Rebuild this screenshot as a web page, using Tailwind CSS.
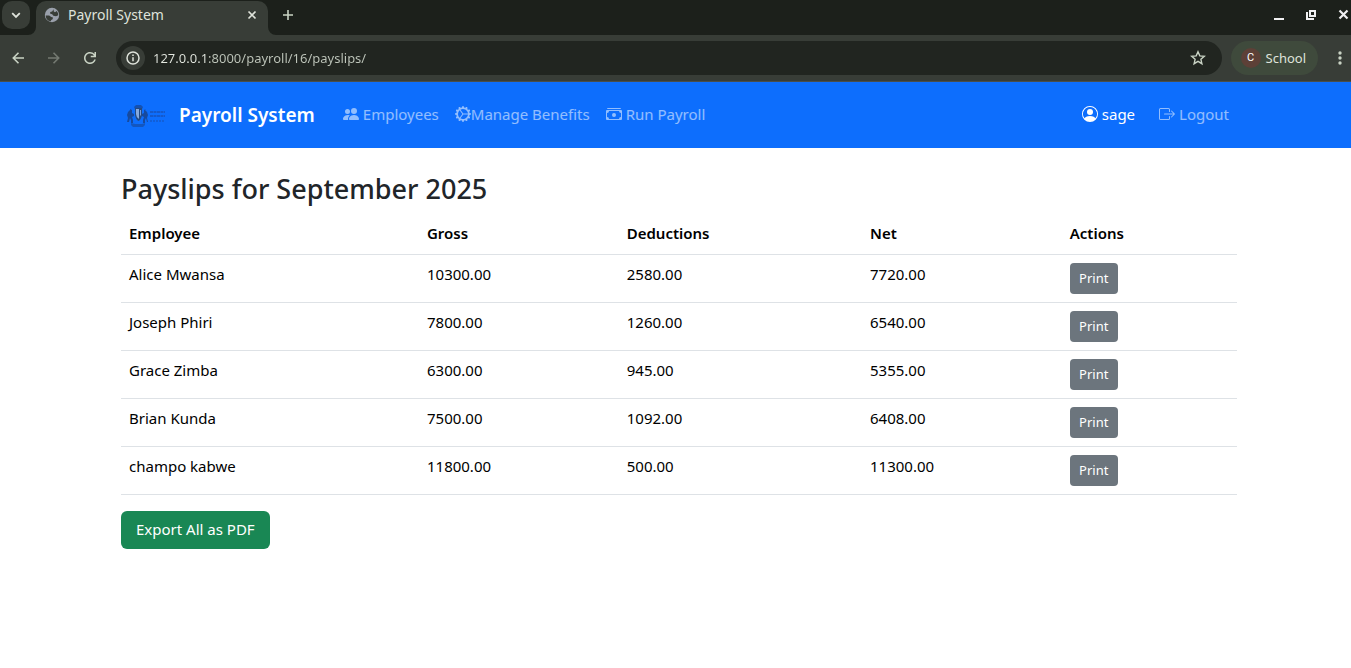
<!DOCTYPE html>
<html lang="en">
<head>
<meta charset="utf-8">
<meta name="viewport" content="width=device-width, initial-scale=1">
<title>Payroll System</title>
<script src="https://cdn.jsdelivr.net/npm/@tailwindcss/browser@4"></script>
</head>
<body class="min-h-screen bg-white font-['Noto_Sans',sans-serif] text-[15px] leading-6 text-[#212529]">

<!-- Browser window frame -->
<header class="text-[#dfe3db]">
  <div class="flex h-[35px] items-start bg-[#1c201b] pl-[2px]">
    <button aria-label="Search tabs" class="mt-px flex size-7 items-center justify-center rounded-[10px] bg-[#383d37]">
      <svg class="size-4" viewBox="0 0 16 16" fill="none" stroke="currentColor" stroke-width="1.800"><path d="M4.200 6.200L8 10l3.800-3.800"/></svg>
    </button>
    <div class="relative mt-px ml-[6px] flex h-[34px] w-[232px] items-center rounded-t-[10px] bg-[#383d37] pr-2 pb-[6px] pl-2">
      <svg class="absolute bottom-0 -left-2 size-2 text-[#383d37]" viewBox="0 0 8 8" fill="currentColor"><path d="M8 0v8H0a8 8 0 0 0 8-8"/></svg>
      <svg class="absolute -right-2 bottom-0 size-2 text-[#383d37]" viewBox="0 0 8 8" fill="currentColor"><path d="M0 0v8h8a8 8 0 0 1-8-8"/></svg>
      <svg class="size-4" viewBox="0 0 16 16"><circle cx="8" cy="8" r="7.200" fill="#9aa0ab"/><g fill="#383d37"><path d="M9.500 2.300L8.200 4.500 6.300 5 6 6.600l2.200.7 1.200 1.500 2.600.4 2.300-1a6.300 6.300 0 0 0-1.600-4.300L11 5.300 9.800 4.500z"/><path d="M1.700 8.400h3.500l2 1.700 1.800.5-.4 1.600-1.400.8-.4 1.300a6.300 6.300 0 0 1-5.100-5.900z"/></g></svg>
      <span class="ml-2 grow text-[14px]">Payroll System</span>
      <button aria-label="Close tab" class="flex size-4 items-center justify-center">
        <svg class="size-4" viewBox="0 0 16 16" fill="none" stroke="currentColor" stroke-width="1.700"><path d="M4.500 4.500l7 7M11.500 4.500l-7 7"/></svg>
      </button>
    </div>
    <button aria-label="New tab" class="mt-[7px] ml-3 flex size-4 items-center justify-center">
      <svg class="size-4 text-[#c9d3c4]" viewBox="0 0 16 16" fill="none" stroke="currentColor" stroke-width="1.600"><path d="M8 3v10M3 8h10"/></svg>
    </button>
    <div class="mt-[7px] ml-auto flex gap-4 text-[#f0f0f2]">
      <button aria-label="Minimize" class="size-4"><svg class="size-4" viewBox="0 0 16 16" fill="currentColor"><path d="M3 11h10v2H3z"/></svg></button>
      <button aria-label="Restore" class="size-4"><svg class="size-4" viewBox="0 0 16 16" fill="none" stroke="currentColor" stroke-width="2"><path d="M7 4h5v5H7zM4 5v7h7"/></svg></button>
      <button aria-label="Close window" class="size-4"><svg class="size-4" viewBox="0 0 16 16" fill="none" stroke="currentColor" stroke-width="2.200"><path d="M4.500 3.500l8 8M12.500 3.500l-8 8"/></svg></button>
    </div>
  </div>
  <div class="flex h-[47px] items-center border-b border-[#4a4e49] bg-[#383d37] pr-[3px] pl-[10px]">
    <div class="flex gap-5 text-[#c9d3c4]">
      <button aria-label="Back" class="size-4"><svg class="size-4" viewBox="0 0 16 16" fill="none" stroke="currentColor" stroke-width="1.600"><path d="M14 8H3.500M8.500 2.800L3.300 8l5.200 5.200"/></svg></button>
      <button aria-label="Forward" class="size-4 text-[#747a72]"><svg class="size-4" viewBox="0 0 16 16" fill="none" stroke="currentColor" stroke-width="1.600"><path d="M2 8h10.500M7.500 2.800L12.700 8l-5.200 5.200"/></svg></button>
      <button aria-label="Reload" class="size-4"><svg class="size-4" viewBox="4 4 16 16" fill="currentColor"><path d="M12 18c-1.675 0-3.096-.58-4.262-1.743C6.575 15.095 6 13.675 6 12s.58-3.096 1.738-4.258C8.904 6.580 10.325 6 12 6c.86 0 1.683.177 2.470.530A5.800 5.800 0 0 1 16.500 8.050V6H18v5.250h-5.250v-1.500h3.150A4.400 4.400 0 0 0 14.260 8.100 4.350 4.350 0 0 0 12 7.500c-1.250 0-2.313.438-3.188 1.313C7.938 9.688 7.500 10.750 7.500 12s.438 2.313 1.313 3.188c.874.874 1.937 1.312 3.187 1.312.963 0 1.830-.275 2.606-.825a4.360 4.360 0 0 0 1.632-2.175h1.574a5.860 5.860 0 0 1-2.137 3.244A5.870 5.870 0 0 1 12 18z"/></svg></button>
    </div>
    <div class="ml-[18px] flex h-[34px] grow items-center rounded-full bg-[#212520] pr-4 pl-[5px]">
      <button aria-label="Site information" class="flex size-6 shrink-0 items-center justify-center rounded-full bg-[#383d37]">
        <svg class="size-4" viewBox="0 0 16 16" fill="none" stroke="currentColor" stroke-width="1.500"><circle cx="8" cy="8" r="6"/><path d="M8 7.200v4M8 4.500v1.600"/></svg>
      </button>
      <input type="text" aria-label="Address" value="127.0.0.1:8000/payroll/16/payslips/" class="ml-2 min-w-0 grow bg-linear-to-r from-[#e4e8e0] from-[53px] to-[#bfc6bb] to-[53px] bg-clip-text text-[13px] text-transparent outline-none">
      <button aria-label="Bookmark" class="size-4 text-[#c9d3c4]"><svg class="size-4" viewBox="0 0 16 16" fill="none" stroke="currentColor" stroke-width="1.400"><path d="M8 1.800l1.800 4.100 4.500.4-3.400 3 1 4.400L8 11.400l-3.900 2.300 1-4.400-3.400-3 4.500-.4z"/></svg></button>
    </div>
    <button class="ml-[9px] flex h-[34px] items-center gap-[5px] rounded-full bg-[#3f4a3c] pr-3 pl-[10px]">
      <span class="flex size-5 items-center justify-center rounded-full bg-[#5d4037] font-['Roboto',sans-serif] text-[11px] text-white">C</span>
      <span class="text-[13px]">School</span>
    </button>
    <button aria-label="Menu" class="ml-[14px] size-4 text-[#c9d3c4]"><svg class="size-4" viewBox="0 0 16 16" fill="currentColor"><circle cx="8" cy="3" r="1.700"/><circle cx="8" cy="8" r="1.700"/><circle cx="8" cy="13" r="1.700"/></svg></button>
  </div>
</header>

<nav class="bg-[#0d6efd] pl-[7px]">
  <div class="mx-auto flex h-[66px] max-w-[1140px] items-center px-3">
    <a href="#" class="flex items-center gap-2 text-[19px] font-semibold text-white">
      <svg class="h-10 w-[50px]" viewBox="0 0 50 40" role="img" aria-label="University crest">
        <!-- supporters -->
        <g fill="#174a9e">
          <path d="M9 14l2 1v3l2 1v2l-2 1 1 3v3h-2v-3l-1-2-1 4H6l1-4-1-3 1-3 2-2z"/>
          <path d="M25 14l-2 1v3l-2 1v2l2 1-1 3v3h2v-3l1-2 1 4h1l-1-4 1-3-1-3-2-2z"/>
          <path d="M15 10h5l2 2-1 2h-7l-1-2z" opacity=".8"/>
          <path d="M10 28l4 1h7l3-1v2l-2 2H12l-2-2z" opacity=".65"/>
        </g>
        <!-- shield -->
        <path d="M14 13h7v7q-1 5-3.500 6-2.500-1-3.500-6z" fill="#244a83"/>
        <path d="M15 14h3v10q-3-2-3-5z" fill="#86a9dd"/>
        <path d="M19 15h1v5l-1 1z" fill="#739bda"/>
        <!-- wordmark -->
        <g stroke="#1459cb" stroke-width="2" stroke-dasharray="2 1"><path d="M29 17h15M29 21h15" stroke-dasharray="3 .5"/><path d="M29 26h15" opacity=".7"/></g>
      </svg>
      <span>Payroll System</span>
    </a>
    <ul class="ml-5 flex grow items-center text-white/55">
      <li><a href="#" class="flex items-center gap-1 px-2 pt-[7px] pb-[9px]"><svg class="size-4" viewBox="0 0 16 16" fill="currentColor"><path d="M7 14s-1 0-1-1 1-4 5-4 5 3 5 4-1 1-1 1zm4-6a3 3 0 1 0 0-6 3 3 0 0 0 0 6m-5.784 6A2.240 2.240 0 0 1 5 13c0-1.355.68-2.750 1.936-3.720A6.300 6.300 0 0 0 5 9c-4 0-5 3-5 4s1 1 1 1zM4.500 8a2.500 2.500 0 1 0 0-5 2.500 2.500 0 0 0 0 5"/></svg>Employees</a></li>
      <li><a href="#" class="flex items-center px-2 pt-[7px] pb-[9px]"><svg class="size-4" viewBox="0 0 16 16" fill="currentColor"><path d="M7.068.727c.243-.97 1.620-.97 1.864 0l.071.286a.96.96 0 0 0 1.622.434l.205-.211c.695-.719 1.888-.03 1.613.931l-.08.284a.96.96 0 0 0 1.187 1.187l.283-.081c.96-.275 1.650.918.931 1.613l-.211.205a.96.96 0 0 0 .434 1.622l.286.071c.97.243.97 1.620 0 1.864l-.286.071a.96.96 0 0 0-.434 1.622l.211.205c.719.695.03 1.888-.931 1.613l-.284-.08a.96.96 0 0 0-1.187 1.187l.081.283c.275.96-.918 1.650-1.613.931l-.205-.211a.96.96 0 0 0-1.622.434l-.071.286c-.243.97-1.620.97-1.864 0l-.071-.286a.96.96 0 0 0-1.622-.434l-.205.211c-.695.719-1.888.03-1.613-.931l.08-.284a.96.96 0 0 0-1.186-1.187l-.284.081c-.96.275-1.650-.918-.931-1.613l.211-.205a.96.96 0 0 0-.434-1.622l-.286-.071c-.97-.243-.97-1.620 0-1.864l.286-.071a.96.96 0 0 0 .434-1.622l-.211-.205c-.719-.695-.03-1.888.931-1.613l.284.08a.96.96 0 0 0 1.187-1.186l-.081-.284c-.275-.96.918-1.650 1.613-.931l.205.211a.96.96 0 0 0 1.622-.434zM12.973 8.500H8.250l-2.834 3.779A4.998 4.998 0 0 0 12.973 8.500m0-1a4.998 4.998 0 0 0-7.557-3.779l2.834 3.780zM4.617 4.322A4.980 4.980 0 0 0 3.002 8c0 1.455.622 2.765 1.615 3.678L7.375 8z"/></svg>Manage Benefits</a></li>
      <li><a href="#" class="flex items-center gap-1 px-2 pt-[7px] pb-[9px]"><svg class="size-4" viewBox="0 0 16 16" fill="currentColor"><path d="M1 3a1 1 0 0 1 1-1h12a1 1 0 0 1 1 1zm7 8a2 2 0 1 0 0-4 2 2 0 0 0 0 4"/><path d="M0 5a1 1 0 0 1 1-1h14a1 1 0 0 1 1 1v8a1 1 0 0 1-1 1H1a1 1 0 0 1-1-1zm3 0a2 2 0 0 1-2 2v4a2 2 0 0 1 2 2h10a2 2 0 0 1 2-2V7a2 2 0 0 1-2-2z"/></svg>Run Payroll</a></li>
    </ul>
    <div class="flex items-center gap-2">
      <span class="flex items-center gap-1 px-2 pt-[7px] pb-[9px] text-white"><svg class="size-4" viewBox="0 0 16 16" fill="currentColor"><path d="M11 6a3 3 0 1 1-6 0 3 3 0 0 1 6 0"/><path fill-rule="evenodd" d="M0 8a8 8 0 1 1 16 0A8 8 0 0 1 0 8m8-7a7 7 0 0 0-5.468 11.370C3.242 11.226 4.805 10 8 10s4.757 1.225 5.468 2.370A7 7 0 0 0 8 1"/></svg>sage</span>
      <a href="#" class="flex items-center gap-1 px-2 pt-[7px] pb-[9px] text-white/55"><svg class="size-4" viewBox="0 0 16 16" fill="currentColor"><path d="M10 12.500a.5.5 0 0 1-.5.5h-8a.5.5 0 0 1-.5-.5v-9a.5.5 0 0 1 .5-.5h8a.5.5 0 0 1 .5.5v2a.5.5 0 0 0 1 0v-2A1.500 1.500 0 0 0 9.500 2h-8A1.500 1.500 0 0 0 0 3.500v9A1.500 1.500 0 0 0 1.500 14h8a1.500 1.500 0 0 0 1.500-1.500v-2a.5.5 0 0 0-1 0z"/><path d="M15.854 8.354a.5.5 0 0 0 0-.708l-3-3a.5.5 0 0 0-.708.708L14.293 7.500H5.500a.5.5 0 0 0 0 1h8.793l-2.147 2.146a.5.5 0 0 0 .708.708z"/></svg>Logout</a>
    </div>
  </div>
</nav>

<main class="pl-[7px]">
  <div class="mx-auto max-w-[1140px] px-3 pt-6">
    <h1 class="mb-2 text-[27px] leading-[34px] font-medium">Payslips for September 2025</h1>
    <table class="mb-4 w-full table-fixed text-left text-black">
      <thead>
        <tr class="border-b border-[#dee2e6]">
          <th class="w-[26.7%] px-2 pt-[7px] pb-[9px] font-semibold">Employee</th>
          <th class="w-[17.9%] px-2 pt-[7px] pb-[9px] font-semibold">Gross</th>
          <th class="w-[21.8%] px-2 pt-[7px] pb-[9px] font-semibold">Deductions</th>
          <th class="w-[17.9%] px-2 pt-[7px] pb-[9px] font-semibold">Net</th>
          <th class="px-2 pt-[7px] pb-[9px] font-semibold">Actions</th>
        </tr>
      </thead>
      <tbody class="align-top">
        <tr class="h-12 border-b border-[#dee2e6]"><td class="px-2 pt-[7px]">Alice Mwansa</td><td class="px-2 pt-[7px]">10300.00</td><td class="px-2 pt-[7px]">2580.00</td><td class="px-2 pt-[7px]">7720.00</td><td class="p-2"><button class="block min-w-12 rounded bg-[#6c757d] px-2 py-[5px] text-[13px] leading-[21px] text-white">Print</button></td></tr>
        <tr class="h-12 border-b border-[#dee2e6]"><td class="px-2 pt-[7px]">Joseph Phiri</td><td class="px-2 pt-[7px]">7800.00</td><td class="px-2 pt-[7px]">1260.00</td><td class="px-2 pt-[7px]">6540.00</td><td class="p-2"><button class="block min-w-12 rounded bg-[#6c757d] px-2 py-[5px] text-[13px] leading-[21px] text-white">Print</button></td></tr>
        <tr class="h-12 border-b border-[#dee2e6]"><td class="px-2 pt-[7px]">Grace Zimba</td><td class="px-2 pt-[7px]">6300.00</td><td class="px-2 pt-[7px]">945.00</td><td class="px-2 pt-[7px]">5355.00</td><td class="p-2"><button class="block min-w-12 rounded bg-[#6c757d] px-2 py-[5px] text-[13px] leading-[21px] text-white">Print</button></td></tr>
        <tr class="h-12 border-b border-[#dee2e6]"><td class="px-2 pt-[7px]">Brian Kunda</td><td class="px-2 pt-[7px]">7500.00</td><td class="px-2 pt-[7px]">1092.00</td><td class="px-2 pt-[7px]">6408.00</td><td class="p-2"><button class="block min-w-12 rounded bg-[#6c757d] px-2 py-[5px] text-[13px] leading-[21px] text-white">Print</button></td></tr>
        <tr class="h-12 border-b border-[#dee2e6]"><td class="px-2 pt-[7px]">champo kabwe</td><td class="px-2 pt-[7px]">11800.00</td><td class="px-2 pt-[7px]">500.00</td><td class="px-2 pt-[7px]">11300.00</td><td class="p-2"><button class="block min-w-12 rounded bg-[#6c757d] px-2 py-[5px] text-[13px] leading-[21px] text-white">Print</button></td></tr>
      </tbody>
    </table>
    <a href="#" class="inline-block rounded-md bg-[#198754] px-[15px] pt-[6px] pb-2 text-white">Export All as PDF</a>
  </div>
</main>
</body>
</html>
